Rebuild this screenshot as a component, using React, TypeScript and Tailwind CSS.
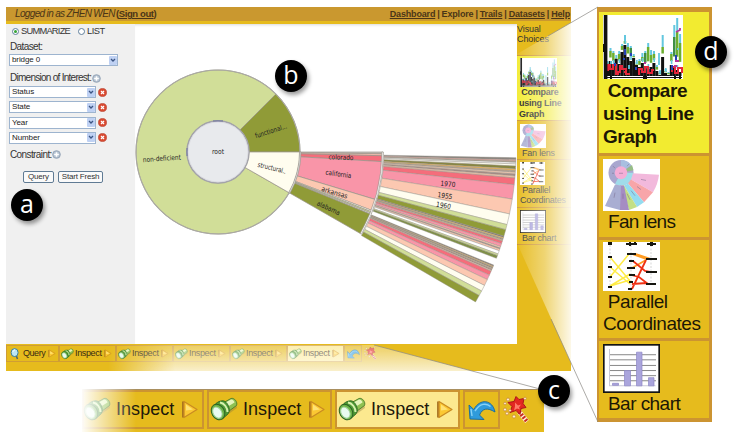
import React from "react";

const GRAY = "#8d8a86";

function polar(r: number, deg: number) {
  const a = (deg * Math.PI) / 180;
  return `${(218 + r * Math.cos(a)).toFixed(2)} ${(152 + r * Math.sin(a)).toFixed(2)}`;
}

function Sector({ r0, r1, a0, a1, fill, sw = 0.7 }: { r0: number; r1: number; a0: number; a1: number; fill: string; sw?: number }) {
  const large = a1 - a0 > 180 ? 1 : 0;
  return (
    <path
      d={`M${polar(r0, a0)} L${polar(r1, a0)} A${r1} ${r1} 0 ${large} 1 ${polar(r1, a1)} L${polar(r0, a1)} A${r0} ${r0} 0 ${large} 0 ${polar(r0, a0)}Z`}
      fill={fill}
      stroke="#99938a"
      strokeWidth={sw}
    />
  );
}

const OLIVE = "#909b37";
const LIME = "#d1de98";
const CREAM = "#fffdef";
const PEACH = "#fcc8b1";
const PINK = "#f995a8";
const RED = "#f56d7b";
const TAN = "#d9b98d";

type Slice = [number, string];

const RING2: Slice[] = [
  [0.6, "#c4c0bb"], [1.3, "#eebcae"], [3.35, RED], [16.8, PINK], [20.8, PEACH],
  [21.3, CREAM], [21.8, LIME], [22.2, "#ffffff"], [29.8, OLIVE],
];

const RING3: Slice[] = [
  [1.5, "#8b8580"], [1.75, "#eda7a0"], [2.0, "#b5a895"], [2.3, "#ffffff"], [2.7, CREAM], [3.25, "#87863f"],
  [3.6, "#e9b45c"], [3.9, "#b9a391"], [4.25, "#eec9b2"], [4.6, "#a98b84"], [5, "#e8c0a8"],
  [6.3, RED], [9.1, PINK], [12, PEACH], [14.1, CREAM], [15.1, LIME], [16.4, OLIVE],
  [16.65, "#7d746b"], [16.9, "#edb85e"], [17.15, "#9a8c83"], [17.4, TAN], [17.9, RED], [18.5, PINK],
  [18.8, PEACH], [19, "#9b8f8a"], [19.35, PEACH], [20, "#ffffff"], [20.35, LIME], [20.9, "#7f9048"],
];

const RING3B: Slice[] = [
  [22.55, "#8c8078"], [22.75, "#eab762"], [22.95, "#8f8079"], [23.15, TAN], [23.4, "#a58b82"], [23.6, PEACH],
  [24.4, RED], [25.35, PINK], [26.6, PEACH], [27.8, CREAM], [28.8, LIME], [30.2, OLIVE],
];

function Ring({ slices, start, r0, r1, sw }: { slices: Slice[]; start: number; r0: number; r1: number; sw: number }) {
  return (
    <g>
      {slices.map(([end, fill], i) => (
        <Sector key={i} r0={r0} r1={r1} a0={i === 0 ? start : slices[i - 1][0]} a1={end} fill={fill} sw={sw} />
      ))}
    </g>
  );
}

function Label({ x, y, rot, w, size = 7, children }: { x: number; y: number; rot: number; w: number; size?: number; children: string }) {
  return (
    <text
      x={x}
      y={y}
      dy="2.4"
      textAnchor="middle"
      fontSize={size}
      textLength={w}
      lengthAdjust="spacingAndGlyphs"
      fill="#222"
      transform={`rotate(${rot} ${x} ${y})`}
      fontFamily='"DejaVu Sans", sans-serif'
    >
      {children}
    </text>
  );
}

function Sunburst() {
  return (
    <svg viewBox="135 24 382 320" className="block h-[320px] w-[382px]">
      <Ring slices={RING3} start={1.1} r0={166} r1={298} sw={0.45} />
      <Ring slices={RING3B} start={22.3} r0={166} r1={298} sw={0.45} />
      <Ring slices={RING2} start={0} r0={82} r1={165} sw={0.7} />
      <Sector r0={163.8} r1={165.4} a0={0} a1={29.8} fill="#f3f3f3" sw={0.6} />
      <Sector r0={31} r1={82} a0={29.8} a1={315} fill={LIME} />
      <Sector r0={31} r1={82} a0={-45} a1={0} fill={OLIVE} />
      <Sector r0={31} r1={82} a0={0} a1={29.8} fill={CREAM} />
      <circle cx="218" cy="152" r="82" fill="none" stroke="#aaa9a3" strokeWidth="1.1" />
      <Sector r0={81.5} r1={83} a0={0} a1={29.8} fill="#d8d8d8" sw={0.6} />
      <circle cx="218" cy="152" r="31" fill="#e8eaed" stroke="#a3a3a9" strokeWidth="1.5" />
      <circle cx="218" cy="152" r="30" fill="none" stroke="#d5d6dc" strokeWidth="0.7" />
      <path d="M187 148v8M213 120.9h10" stroke="#5b5fa0" strokeWidth="0.8" fill="none" />
      <Label x={218} y={152} rot={0} w={12}>root</Label>
      <Label x={161.8} y={158.5} rot={-4} w={38}>non-deficient</Label>
      <Label x={271} y={131} rot={-18} w={33}>functional...</Label>
      <Label x={272} y={168} rot={14} w={29}>structural..</Label>
      <Label x={341} y={157.3} rot={2} w={25}>colorado</Label>
      <Label x={338.5} y={174} rot={8} w={26}>california</Label>
      <Label x={334.5} y={192.5} rot={17} w={27}>arkansas</Label>
      <Label x={328.5} y={208} rot={25} w={25}>alabama</Label>
      <Label x={448} y={184} rot={5} w={15}>1970</Label>
      <Label x={445} y={195.8} rot={8} w={15}>1955</Label>
      <Label x={443.5} y={205.5} rot={10} w={15}>1960</Label>
    </svg>
  );
}

/* ---------- thumbnails ---------- */

/* One entry per 3px column: tops of the black, green and cyan runs. */
const SERIES: [number, number, number][] = [
  [52, 48, 46], [46, 36, 33], [50, 38, 36], [44, 43, 40], [49, 39, 36], [37, 31, 29],
  [30, 26, 20], [42, 32, 28], [46, 33, 31], [43, 41, 39], [50, 49, 47], [52, 46, 44],
  [48, 42, 38], [53, 38, 36], [54, 32, 28], [52, 40, 35], [48, 39, 36], [56, 52, 50],
  [60, 58, 56], [42, 32, 20], [58, 56, 54], [60, 58, 57], [50, 39, 37], [52, 22, 10],
  [55, 17, 3], [57, 28, 19],
];

function LineThumb({ className }: { className: string }) {
  return (
    <svg viewBox="0 0 80 64" preserveAspectRatio="none" className={className}>
      <rect width="80" height="64" fill="#fff" />
      {SERIES.map(([black, green, cyan], i) => {
        const x = 3 + i * 2.9;
        return (
          <g key={i}>
            <rect x={x} y={black} width="3" height={61 - black} fill="#111" />
            <rect x={x + 0.3} y={green} width="2.5" height={(black - green) * 0.65} fill={i % 5 === 3 ? "#3f8f45" : "#6cae2f"} />
            <rect x={x + 0.6} y={cyan} width="2" height={green - cyan} fill="#63c7df" />
            {i % 2 === 0 && <rect x={x + 1} y={black - 5} width="1.6" height="4" fill="#63c7df" />}
          </g>
        );
      })}
      <path d="M5 56v-6h2v4h3v-4h3v7h4v-6h2v3h4v5h4M36 60v-6h3v3h3v-5h3v6h4v-3h2M69 57v-5h3v6h3v-5h4v5M12 59h4M21 57h3" fill="none" stroke="#e5263b" strokeWidth="2" />
      <path d="M22 34v6M20 44h2M28 38v3M73 40v7M69 50v5M33 52v3M12 48v3" stroke="#2541b5" strokeWidth="2" />
      <path d="M73 17l4-2v-2M72 46h4M41 48h2M71 51h3" stroke="#b5359b" strokeWidth="1.8" fill="none" />
      <path d="M56 38v12M74 34h2M8 46v3M26 50v4" stroke="#63c7df" strokeWidth="1.8" />
      <path d="M2.600 0v64" stroke="#111" strokeWidth="3.600" />
      <path d="M4 62.500h75" stroke="#111" strokeWidth="1.200" />
      <path d="M0 29h2v8H0zM7 61h2v3H7zM40 61h4v3h-4zM71 61h2v3h-2zM76 61h2v3h-2z" fill="#111" />
    </svg>
  );
}

function FanThumb({ className }: { className: string }) {
  return (
    <svg viewBox="0 0 57 51" preserveAspectRatio="none" className={className}>
      <rect width="57" height="51" fill="#fff" />
      <circle cx="18" cy="13.5" r="12.5" fill="#a9a7cf" />
      <path d="M18 13.5V1a12.5 12.5 0 0 1 10 5Z" fill="#a8bfe0" />
      <path d="M18 13.5l11-7.5 1.500 5Z" fill="#96bd87" />
      <path d="M18 13.5h12.500A12.500 12.500 0 0 1 12 24.500Z" fill="#a0dcea" />
      <path d="M30 14l26 1.500a40 40 0 0 1-6 17L28 20Z" fill="#f2b9dc" />
      <path d="M28 20l22 12.500-9 10L25 24Z" fill="#f8a5a9" />
      <path d="M25 24l16 18.500-7 4.500L21 26Z" fill="#95dcf0" />
      <path d="M21 26l13 21-8 3-7-24Z" fill="#c3df86" />
      <path d="M17 26h4l5 24h-9Z" fill="#a58cc3" />
      <path d="M12 25l6 1-1 24-15-4Z" fill="#a9aed2" />
      <circle cx="18" cy="13.500" r="6.300" fill="#f5add6" />
      <path d="M16 14h4M38 20l5 1M34 27l4 3M28 31l4 5M12 33l-1 5M20 34v5M24 34l3 6M10 7l2 2M9 14h2M24 7l2-2" stroke="#776a8b" strokeWidth="0.500" />
    </svg>
  );
}

function ParallelThumb({ className }: { className: string }) {
  return (
    <svg viewBox="0 0 57 49" preserveAspectRatio="none" className={className}>
      <rect width="57" height="49" fill="#fff" />
      <path d="M7 3v43M28 3v46M48 3v40" stroke="#bbb" strokeWidth="0.6" strokeDasharray="2 1.500" />
      <path d="M7 15l20 24M7 35L26 12M7 44l20-6M7 25l20 17M7 44l20-12" stroke="#ffec45" strokeWidth="1.500" />
      <path d="M29 26l14-8M29 12l14 5M33 12l15 5" stroke="#ff9c23" strokeWidth="1.700" fill="none" />
      <path d="M30 19l12 10 5 1M29 47l14-29M28 33l8 2 9 7M29 42l15-1" stroke="#ef3215" strokeWidth="1.800" fill="none" />
      <path d="M5 15h4M5 25h4M5 35h4M5 45h4M24 12h9M26 19h5M24 26h8M26 33h6M26 40h4M25 47h4M43 17h11M43 30h11M43 42h10" stroke="#15150f" strokeWidth="2" />
      <path d="M5 0h4v3H5zM23 1h11v2H23zM26 0h2v4h-2zM31 0h2v3h-2zM44 1h9v2h-9zM47 0h3v4h-3z" fill="#15150f" />
    </svg>
  );
}

function BarThumb({ className }: { className: string }) {
  return (
    <svg viewBox="0 0 57 48" preserveAspectRatio="none" className={className}>
      <rect x="0.800" y="0.800" width="55.400" height="46.400" fill="#fff" stroke="#141414" strokeWidth="1.700" />
      <path d="M6 10.500h47M6 15.500h47M6 21h47M6 26h47M6 31h47M6 36h47" stroke="#7c7c7c" strokeWidth="0.900" />
      <path d="M6.500 5v36h46" stroke="#c9c9d8" strokeWidth="1" fill="none" />
      <path d="M9.500 38.500h6v2h-6zM21.500 26h6v15h-6zM33.500 8h5.500v33h-5.500zM45.500 33h5.500v8h-5.500z" fill="#aaa5dc" stroke="#8d87c6" strokeWidth="0.700" />
    </svg>
  );
}

/* ---------- toolbar icons ---------- */

function Flashlight({ className }: { className: string }) {
  return (
    <svg viewBox="0 0 28 25" className={className}>
      <path d="M10 23L27 11l-1-5-12 8Z" fill="#8d7a3d" opacity="0.400" />
      <path d="M11 7L21 1.500c3-1.200 7 3.500 5.500 7L17 15.500Z" fill="#8fc152" stroke="#4b7c28" strokeWidth="0.900" />
      <path d="M13 7l8-4.500c1.500-.3 3.500 1.500 3.500 3L15.500 11Z" fill="#e6f5bd" />
      <path d="M5 7.500c3-3.500 8-4.500 10-3 3 2 5 7 4 10.500-.7 2-3 4-6 6Z" fill="#4f9a35" stroke="#28651f" strokeWidth="0.900" />
      <path d="M10 5.500c4 .5 7.500 5 7.500 9.500" stroke="#d8f1ae" strokeWidth="2" fill="none" />
      <ellipse cx="8" cy="15" rx="6.300" ry="8.200" transform="rotate(-30 8 15)" fill="#6bb348" stroke="#2b6124" strokeWidth="1" />
      <ellipse cx="7.400" cy="15.600" rx="4.200" ry="6" transform="rotate(-30 7.400 15.600)" fill="#e9fbf0" stroke="#a3d49b" strokeWidth="1" />
    </svg>
  );
}

function Play({ className }: { className: string }) {
  return (
    <svg viewBox="0 0 18 20" className={className}>
      <path d="M2 18V2" stroke="#a36e1e" strokeWidth="1.800" />
      <path d="M3 2l13 8L3 18Z" fill="#fbc833" stroke="#c98b22" strokeWidth="1.300" strokeLinejoin="round" />
      <path d="M5 5l7 5-7 1Z" fill="#ffe274" />
    </svg>
  );
}

function Undo({ className }: { className: string }) {
  return (
    <svg viewBox="0 0 28 23" className={className}>
      <path d="M1 7l1 14 14 .5-4.500-4.500c3-7 8-7.500 15.500-3C24.500 1.500 12 0 5.800 11.500Z" fill="#2f9bdb" stroke="#14679f" strokeWidth="0.900" strokeLinejoin="round" />
      <path d="M7 13C12 5.500 18 4.500 22.500 8.500M3 11l1 7" stroke="#86d2f7" strokeWidth="1.400" fill="none" />
    </svg>
  );
}

function Wand({ className }: { className: string }) {
  return (
    <svg viewBox="0 0 27 27" className={className}>
      <path d="M16 15l8 10" stroke="#fff1d8" strokeWidth="4.500" />
      <path d="M16 15l8 10" stroke="#c92d20" strokeWidth="4" strokeDasharray="2 1.400" />
      <path d="M13 0l3 3 5-1-1 5 3 4-5 1-1 6-4-4-6 2 2-6-4-4 6-1Z" fill="#e32822" stroke="#a91919" />
      <path d="M12 6l3 3 3-1-2 3 1 2-3-1-3 2 1-4Z" fill="#ff7b68" />
      <g fill="#fff0c8" stroke="#bd7337" strokeWidth="0.600">
        <circle cx="5" cy="3" r="1.500" /><circle cx="2" cy="7" r="1.300" /><circle cx="2" cy="13" r="1.500" />
        <circle cx="4" cy="17" r="1.400" /><circle cx="11" cy="20" r="1.600" /><circle cx="22" cy="2" r="1.300" /><circle cx="7" cy="14" r="1.200" />
      </g>
    </svg>
  );
}

function Magnifier() {
  return (
    <svg viewBox="0 0 10 12" className="h-[12px] w-[10px] shrink-0">
      <path d="M6 7l1.500 4" stroke="#49636a" strokeWidth="1.500" />
      <ellipse cx="4.600" cy="4.600" rx="3.500" ry="4" fill="#bde6f3" stroke="#397e9b" strokeWidth="1" />
      <path d="M3 4c0-1 .7-2 2-2" stroke="#fff" strokeWidth="1" fill="none" />
    </svg>
  );
}

/* ---------- form ---------- */

function Select({ value, wide }: { value: string; wide?: boolean }) {
  return (
    <div className={`flex h-[12px] items-center justify-between border border-[#9db4cf] bg-white pl-[2px] ${wide ? "w-[109px]" : "w-[87px]"}`}>
      <span className="text-[8px] leading-[10px] tracking-[-0.100px] text-[#222]">{value}</span>
      <span className="flex h-[9px] w-[8px] items-center justify-center rounded-[1px] bg-[#bfd1f3]">
        <svg viewBox="0 0 6 5" className="h-[5px] w-[6px]"><path d="M1 1l2 2 2-2" fill="none" stroke="#3c5583" strokeWidth="1.300" /></svg>
      </span>
    </div>
  );
}

function Remove() {
  return (
    <svg viewBox="0 0 10 10" className="h-[9px] w-[9px]">
      <circle cx="5" cy="5" r="4.500" fill="#d94a31" stroke="#b8402e" strokeWidth="0.700" />
      <path d="M3.300 3.300l3.400 3.400M6.700 3.300L3.300 6.700" stroke="#fff" strokeWidth="1.300" />
    </svg>
  );
}

function Add() {
  return (
    <svg viewBox="0 0 10 10" className="h-[9px] w-[9px] shrink-0">
      <circle cx="5" cy="5" r="4.300" fill="#b4c1d0" stroke="#8798ad" strokeWidth="0.800" />
      <path d="M5 2.400v5.200M2.400 5h5.200" stroke="#fff" strokeWidth="1.800" />
    </svg>
  );
}

function Radio({ on }: { on?: boolean }) {
  return (
    <span className="flex h-[7px] w-[7px] items-center justify-center rounded-full border border-[#607f9b] bg-white">
      {on && <span className="h-[3px] w-[3px] rounded-full bg-[#35a435]" />}
    </span>
  );
}

function QueryForm() {
  return (
    <aside className="flex h-[320px] w-[129px] shrink-0 flex-col bg-[#f0f0f0] pl-[3px] text-[10px] leading-[12px] text-[#333]">
      <div className="flex h-[14px] items-center pl-[3px]">
        <Radio on />
        <span className="ml-[2px] w-[50px] text-[9.300px] tracking-[-0.750px]">SUMMARIZE</span>
        <span className="ml-[7px] flex items-center gap-[2px] text-[9.300px] tracking-[-0.500px]"><Radio />LIST</span>
      </div>
      <div className="mt-[3px] pl-px tracking-[-0.600px]">Dataset:</div>
      <div className="mt-[1px]"><Select value="bridge 0" wide /></div>
      <div className="mt-[6px] flex items-center pl-px"><span className="w-[82px] whitespace-nowrap tracking-[-0.730px]">Dimension of Interest:</span><Add /></div>
      <div className="mt-[2px] flex flex-col gap-[3.300px]">
        {["Status", "State", "Year", "Number"].map((v) => (
          <div key={v} className="flex items-center gap-[2px]"><Select value={v} /><Remove /></div>
        ))}
      </div>
      <div className="mt-[5px] flex items-center pl-px"><span className="w-[42px] tracking-[-0.600px]">Constraint:</span><Add /></div>
      <div className="mt-[10px] flex gap-[4px] pl-[14px]">
        {["Query", "Start Fresh"].map((v) => (
          <button key={v} className={`h-[12px] whitespace-nowrap rounded-[2px] border border-[#607b94] bg-[#fafafa] text-[8px] leading-[10px] tracking-[-0.200px] ${v === "Query" ? "w-[31px]" : "w-[45px]"}`}>{v}</button>
        ))}
      </div>
    </aside>
  );
}

/* ---------- visual choices ---------- */

function SmallChoices() {
  const cell = "border-b border-[#cc9431] pl-[3px] text-[10px] leading-[11px]";
  return (
    <aside className="h-[320px] w-[54px] shrink-0 overflow-hidden bg-[#e6bb1d] text-[#333]">
      <div className="h-[31px] text-[9px] leading-[10px] tracking-[-0.100px]">Visual<br />Choices</div>
      <div className="h-[66px] border-y border-[#cc9431] bg-[#f2eb30] pl-[2px] pt-[2px] text-[9px] font-bold leading-[11px] text-[#222]">
        <LineThumb className="ml-px block h-[29px] w-[37px]" />
        <div className="whitespace-nowrap tracking-[-0.250px]">&nbsp;Compare<br />using Line<br />Graph</div>
      </div>
      <div className={`h-[39px] pt-[3px] ${cell}`}>
        <FanThumb className="block h-[24px] w-[26px]" />
        <div className="pl-[2px] text-[9px] tracking-[-0.200px]">Fan lens</div>
      </div>
      <div className={`h-[48px] pt-[2px] ${cell}`}>
        <ParallelThumb className="block h-[23px] w-[25px]" />
        <div className="text-[9px] leading-[10px] tracking-[-0.250px]">&nbsp;Parallel<br />Coordinates</div>
      </div>
      <div className={`h-[37px] pt-[2px] ${cell}`}>
        <BarThumb className="block h-[23px] w-[26px]" />
        <div className="pl-[2px] text-[9px] tracking-[-0.250px]">Bar chart</div>
      </div>
    </aside>
  );
}

function LargeChoices() {
  return (
    <aside className="mt-[7px] flex h-[415px] w-[115px] shrink-0 flex-col gap-[3px] border-b-[4px] border-l-2 border-r-[3px] border-t-[5px] border-[#cc9431] bg-[#cc9431] pb-0 text-[19px] leading-[22px] text-[#1b1705]">
      <div className="h-[141px] bg-[#f2eb30] pl-[4px] pt-[3px] font-bold">
        <LineThumb className="block h-[64px] w-[80px]" />
        <div className="whitespace-nowrap text-[19px] leading-[23px] tracking-[-0.450px]">&nbsp;Compare<br />using Line<br />Graph</div>
      </div>
      <div className="h-[81px] bg-[#e6bb1d] pl-[4px] pt-[3px]">
        <FanThumb className="block h-[52px] w-[57px]" />
        <div className="pl-[5px] tracking-[-0.700px]">Fan lens</div>
      </div>
      <div className="h-[98px] bg-[#e6bb1d] pl-[4px] pt-[2px]">
        <ParallelThumb className="block h-[49px] w-[57px]" />
        <div className="whitespace-nowrap tracking-[-0.450px]">&nbsp;Parallel<br />Coordinates</div>
      </div>
      <div className="min-h-0 flex-1 bg-[#e6bb1d] pl-[4px] pt-[3px]">
        <BarThumb className="block h-[49px] w-[57px]" />
        <div className="pl-[5px] tracking-[-0.550px]">Bar chart</div>
      </div>
    </aside>
  );
}

/* ---------- trails ---------- */

function SmallTrail() {
  return (
    <footer className="h-[27px] bg-[#e6bb1d]">
      <div className="flex h-[18px] items-stretch pt-px text-[9px] text-[#392b13]">
        <div className="flex w-[53px] items-center border border-[#cf9d35] pl-[3px]">
          <Magnifier />
          <span className="ml-[3px] w-[24px] tracking-[-0.450px]">Query</span>
          <Play className="ml-px h-[9px] w-[8px] shrink-0" />
        </div>
        {[0, 1, 2, 3, 4].map((i) => (
          <div key={i} className={`flex w-[57px] items-center border border-[#cf9d35] pl-px ${i === 4 ? "bg-[#fce98f]" : ""}`}>
            <Flashlight className="h-[12px] w-[13px] shrink-0" />
            <span className="ml-px w-[29px] tracking-[-0.350px]">Inspect</span>
            <Play className="h-[9px] w-[8px] shrink-0" />
          </div>
        ))}
        <div className="flex w-[18px] items-center justify-center border border-[#cf9d35]"><Undo className="h-[11px] w-[13px]" /></div>
        <div className="flex w-[16px] items-center justify-center"><Wand className="h-[13px] w-[13px]" /></div>
      </div>
    </footer>
  );
}

function LargeTrail() {
  return (
    <div className="ml-[82px] mt-[18px] flex h-[43px] w-[462px] border-t border-[#a98f5e] bg-[#e6bb1d] pb-[3px] text-[18px] text-[#20180a]">
      {[0, 1, 2].map((i) => (
        <div
          key={i}
          className={`flex items-center border-2 border-[#cc9431] ${i === 0 ? "w-[122px]" : "ml-[3px] w-[125px]"} ${i === 2 ? "bg-[#fce98f]" : ""}`}
        >
          <Flashlight className={`h-[25px] w-[28px] shrink-0 ${i === 0 ? "-ml-px" : "ml-[1px]"}`} />
          <span className="ml-[5px] w-[61px] pb-px tracking-[0.050px]">Inspect</span>
          <Play className="ml-[4px] h-[21px] w-[18px] shrink-0" />
        </div>
      ))}
      <div className="ml-[3px] flex w-[37px] items-center justify-center border-2 border-[#cc9431]"><Undo className="h-[23px] w-[28px]" /></div>
      <div className="flex w-[38px] items-center pl-[3px]"><Wand className="h-[28px] w-[27px]" /></div>
    </div>
  );
}

function Badge({ className, children }: { className: string; children: string }) {
  return (
    <div className={`absolute flex h-[32px] w-[32px] items-center justify-center rounded-full bg-black font-['Open_Sans',sans-serif] text-[25px] leading-none text-white shadow-[2px_3px_4px_rgba(0,0,0,0.4)] ${className}`}>
      <span className="pb-[3px]">{children}</span>
    </div>
  );
}

function Callouts() {
  return (
    <svg viewBox="0 0 736 435" className="pointer-events-none absolute left-0 top-0 h-[435px] w-[736px]">
      <defs>
        <linearGradient id="side" gradientUnits="userSpaceOnUse" x1="517" x2="572" y1="0" y2="0">
          <stop offset="0" stopColor="#fff" stopOpacity="0.050" />
          <stop offset="0.5" stopColor="#fff" stopOpacity="0.380" />
          <stop offset="1" stopColor="#fff" stopOpacity="0.920" />
        </linearGradient>
        <linearGradient id="down" x1="0" x2="0" y1="0" y2="1">
          <stop offset="0" stopColor="#fff" stopOpacity="0.300" />
          <stop offset="1" stopColor="#fff" stopOpacity="0.780" />
        </linearGradient>
        <linearGradient id="edge" gradientUnits="userSpaceOnUse" x1="108" x2="175" y1="0" y2="0">
          <stop offset="0" stopColor="#000" />
          <stop offset="1" stopColor="#fff" />
        </linearGradient>
        <mask id="soft" maskUnits="userSpaceOnUse" x="0" y="300" width="736" height="135"><rect x="0" y="300" width="736" height="135" fill="url(#edge)" /></mask>
        <linearGradient id="left" gradientUnits="userSpaceOnUse" x1="80" x2="136" y1="0" y2="0">
          <stop offset="0" stopColor="#fff" />
          <stop offset="1" stopColor="#fff" stopOpacity="0" />
        </linearGradient>
      </defs>
      <path d="M517 54L572 22V365L517 243Z" fill="url(#side)" />
      <path d="M100 345H374L474 371.500H100Z" fill="url(#down)" mask="url(#soft)" />
      <rect x="80" y="388" width="56" height="46" fill="url(#left)" />
      <path d="M598 7L548 36M374 345L540 389M551 319L598 422" stroke={GRAY} strokeOpacity="0.800" strokeWidth="0.900" fill="none" />
    </svg>
  );
}

export default function App() {
  return (
    <main className="relative flex h-[435px] w-[736px] overflow-hidden bg-white font-['Liberation_Sans',Arial,sans-serif]">
      <div className="w-[597px] shrink-0">
        <section className="ml-[6px] mt-[7px] h-[364px] w-[565px]">
          <header className="flex h-[17px] items-center justify-between border-b-[3px] border-[#e6bb1d] bg-[#ca982f] pl-[9px] pr-px text-[10px] leading-[14px] text-[#4b3517]">
            <div className="flex whitespace-nowrap"><i className="w-[101px] tracking-[-0.650px]">Logged in as ZHEN WEN</i><b className="text-[9.500px] tracking-[-0.400px]">(<u>Sign out</u>)</b></div>
            <nav className="flex gap-[2px] whitespace-nowrap text-[9px] font-bold tracking-[-0.170px]">
              <u>Dashboard</u><span>|</span><span>Explore</span><span>|</span><u>Trails</u><span>|</span><u>Datasets</u><span>|</span><u>Help</u>
            </nav>
          </header>
          <div className="flex h-[320px]">
            <QueryForm />
            <div className="w-[382px] shrink-0 bg-white shadow-[inset_0_3px_3px_-2px_rgba(0,0,0,0.15)]"><Sunburst /></div>
            <SmallChoices />
          </div>
          <SmallTrail />
        </section>
        <LargeTrail />
      </div>
      <LargeChoices />
      <Callouts />
      <Badge className="left-[11px] top-[189px]">a</Badge>
      <Badge className="left-[275px] top-[60px]">b</Badge>
      <Badge className="left-[538px] top-[375px]">c</Badge>
      <Badge className="left-[695px] top-[36px]">d</Badge>
    </main>
  );
}
